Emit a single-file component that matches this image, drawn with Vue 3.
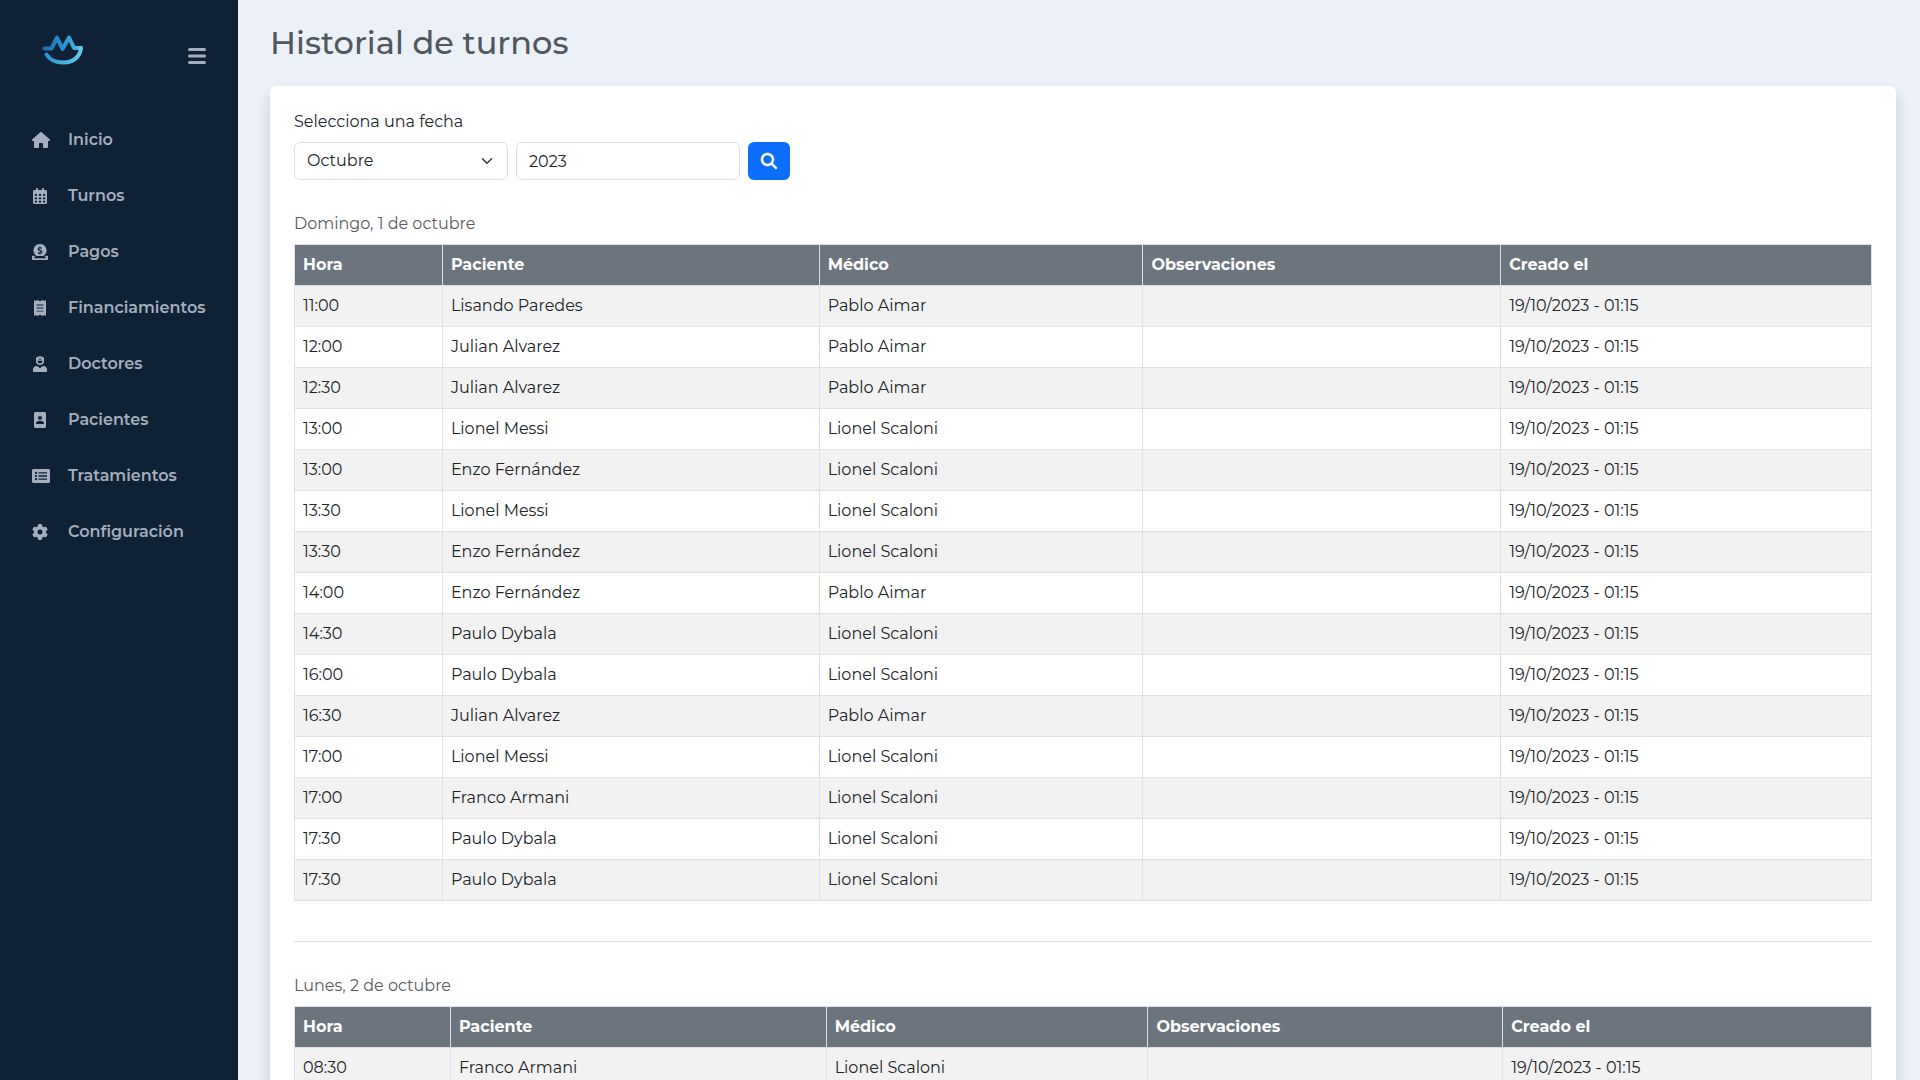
<script setup>
import { ref } from 'vue'

const menu = [
  { label: 'Inicio', w: 576, d: 'M575.8 255.5c0 18-15 32.1-32 32.1h-32l.7 160.2c0 2.7-.2 5.4-.5 8.1V472c0 22.1-17.9 40-40 40H456c-1.1 0-2.2 0-3.3-.1c-1.4 .1-2.8 .1-4.2 .1H416 392c-22.1 0-40-17.9-40-40V448 384c0-17.7-14.3-32-32-32H256c-17.7 0-32 14.3-32 32v64 24c0 22.1-17.9 40-40 40H160 128.1c-1.5 0-3-.1-4.5-.2c-1.2 .1-2.4 .2-3.6 .2H104c-22.1 0-40-17.9-40-40V360c0-.9 0-1.9 .1-2.8V287.6H32c-18 0-32-14-32-32.1c0-9 3-17 10-24L266.4 8c7-7 15-8 22-8s15 2 21 7L564.8 231.5c8 7 12 15 11 24z' },
  { label: 'Turnos', w: 448, d: 'M128 0c17.700 0 32 14.300 32 32v32h128V32c0-17.700 14.300-32 32-32s32 14.300 32 32v32h48c26.500 0 48 21.500 48 48v352c0 26.500-21.500 48-48 48H48c-26.500 0-48-21.500-48-48V112c0-26.500 21.500-48 48-48h48V32c0-17.700 14.300-32 32-32zM56 192v56h72v-56H56zm128 0v56h80v-56h-80zm136 0v56h72v-56h-72zM56 300v56h72v-56H56zm128 0v56h80v-56h-80zm136 0v56h72v-56h-72zM56 408v52h72v-52H56zm128 0v52h80v-52h-80zm136 0v52h72v-52h-72z' },
  { label: 'Pagos', w: 512, d: 'M256 0a208 208 0 0 1 147 355l-38 29H147l-38-29A208 208 0 0 1 256 0zM235 82v24c-35 6-54 29-54 57 0 43 37 56 68 65 30 9 38 14 38 27 0 12-12 18-31 18-21 0-41-8-56-17l-17 36c15 10 33 17 52 20v26h38v-25c36-5 56-29 56-59 0-45-37-58-69-67-28-8-37-13-37-25 0-9 10-17 28-17 18 0 34 5 48 13l16-36c-13-7-28-12-42-15V82h-38zM32 376H80l36 40H84c-11 0-20 8-20 18s9 18 20 18H428c11 0 20-8 20-18s-9-18-20-18H396l36-40H480c18 0 32 14 32 32v72c0 18-14 32-32 32H32c-18 0-32-14-32-32V408c0-18 14-32 32-32z' },
  { label: 'Financiamientos', w: 384, d: 'M0 0l54 32L108 0l56 32h56L276 0l54 32L384 0v512l-54-32-54 32-56-32h-56l-56 32-54-32L0 512V0zm80 144v28h224v-28H80zm0 98v28h224v-28H80zm0 98v28h224v-28H80z' },
  { label: 'Doctores', w: 448, d: 'M96 128V70c0-13 8-25 21-30l84-31c15-6 31-6 46 0l84 31c13 5 21 17 21 30v58v32a128 128 0 0 1-256 0zm48 20v12a80 80 0 0 0 160 0v-12zm32-56v20h96v-20l-48-20zM112 320c20 0 34 6 50 15l62 65 62-65c16-9 30-15 50-15 62 0 112 50 112 112v48c0 18-14 32-32 32H32c-18 0-32-14-32-32v-48c0-62 50-112 112-112z' },
  { label: 'Pacientes', w: 384, d: 'M48 0h288c26 0 48 22 48 48v416c0 26-22 48-48 48H48c-26 0-48-22-48-48V48C0 22 22 0 48 0zm144 128a64 64 0 1 0 0 128 64 64 0 0 0 0-128zM144 288c-44 0-80 36-80 80v16h256v-16c0-44-36-80-80-80h-96z' },
  { label: 'Tratamientos', w: 576, d: 'M48 32h480c27 0 48 21 48 48v352c0 27-21 48-48 48H48c-27 0-48-21-48-48V80c0-27 21-48 48-48zm80 88a36 36 0 1 0 0 72 36 36 0 0 0 0-72zm80 14v42h272v-42H208zm-80 86a36 36 0 1 0 0 72 36 36 0 0 0 0-72zm80 14v42h272v-42H208zm-80 86a36 36 0 1 0 0 72 36 36 0 0 0 0-72zm80 14v42h272v-42H208z' },
  { label: 'Configuración', w: 512, d: 'M495.9 166.600c3.200 8.700 .5 18.400-6.400 24.600l-43.300 39.400c1.100 8.300 1.700 16.800 1.700 25.400s-.6 17.100-1.700 25.400l43.300 39.400c6.900 6.200 9.600 15.900 6.400 24.600c-4.400 11.900-9.700 23.300-15.800 34.300l-4.700 8.100c-6.600 11-14 21.400-22.100 31.200c-5.900 7.200-15.700 9.600-24.500 6.800l-55.700-17.700c-13.400 10.300-28.200 18.900-44 25.400l-12.500 57.100c-2 9.100-9 16.300-18.200 17.800c-13.800 2.300-28 3.500-42.500 3.500s-28.700-1.200-42.500-3.500c-9.200-1.500-16.200-8.700-18.200-17.800l-12.500-57.100c-15.800-6.500-30.600-15.100-44-25.400L83.100 425.900c-8.800 2.800-18.600 .3-24.500-6.800c-8.100-9.800-15.500-20.200-22.100-31.200l-4.700-8.100c-6.100-11-11.400-22.400-15.800-34.300c-3.200-8.700-.5-18.400 6.400-24.600l43.300-39.400C64.600 273.100 64 264.600 64 256s.6-17.100 1.700-25.400L22.400 191.200c-6.900-6.200-9.600-15.900-6.400-24.600c4.400-11.900 9.700-23.300 15.800-34.300l4.700-8.100c6.600-11 14-21.400 22.100-31.200c5.900-7.200 15.700-9.600 24.500-6.800l55.700 17.700c13.400-10.300 28.200-18.900 44-25.400l12.500-57.100c2-9.100 9-16.300 18.200-17.800C227.300 1.200 241.500 0 256 0s28.700 1.200 42.500 3.500c9.200 1.500 16.200 8.700 18.200 17.800l12.500 57.100c15.800 6.500 30.600 15.100 44 25.400l55.700-17.700c8.800-2.800 18.600-.3 24.500 6.800c8.100 9.800 15.500 20.200 22.100 31.200l4.700 8.100c6.100 11 11.400 22.400 15.800 34.300zM256 336a80 80 0 1 0 0-160 80 80 0 1 0 0 160z' },
]

const months = ['Enero', 'Febrero', 'Marzo', 'Abril', 'Mayo', 'Junio', 'Julio', 'Agosto', 'Septiembre', 'Octubre', 'Noviembre', 'Diciembre']
const month = ref('Octubre')
const year = ref('2023')

const columns = ['Hora', 'Paciente', 'Médico', 'Observaciones', 'Creado el']
const created = '19/10/2023 - 01:15'
const days = [
  {
    title: 'Domingo, 1 de octubre',
    weights: [148, 377, 324, 358, 371],
    rows: [
      ['11:00', 'Lisando Paredes', 'Pablo Aimar'],
      ['12:00', 'Julian Alvarez', 'Pablo Aimar'],
      ['12:30', 'Julian Alvarez', 'Pablo Aimar'],
      ['13:00', 'Lionel Messi', 'Lionel Scaloni'],
      ['13:00', 'Enzo Fernández', 'Lionel Scaloni'],
      ['13:30', 'Lionel Messi', 'Lionel Scaloni'],
      ['13:30', 'Enzo Fernández', 'Lionel Scaloni'],
      ['14:00', 'Enzo Fernández', 'Pablo Aimar'],
      ['14:30', 'Paulo Dybala', 'Lionel Scaloni'],
      ['16:00', 'Paulo Dybala', 'Lionel Scaloni'],
      ['16:30', 'Julian Alvarez', 'Pablo Aimar'],
      ['17:00', 'Lionel Messi', 'Lionel Scaloni'],
      ['17:00', 'Franco Armani', 'Lionel Scaloni'],
      ['17:30', 'Paulo Dybala', 'Lionel Scaloni'],
      ['17:30', 'Paulo Dybala', 'Lionel Scaloni'],
    ],
  },
  {
    title: 'Lunes, 2 de octubre',
    weights: [156, 376, 322, 355, 369],
    rows: [['08:30', 'Franco Armani', 'Lionel Scaloni']],
  },
]
const share = (day, i) => `${(day.weights[i] / day.weights.reduce((a, b) => a + b)) * 100}%`
</script>

<template>
  <div class="layout">
    <aside class="sidebar">
      <header class="brand">
        <a href="#" class="logo" aria-label="Inicio">
          <svg width="42" height="32" viewBox="0 0 42 32" fill="none">
            <defs>
              <linearGradient id="smile" x1="0" y1="0" x2="1" y2="0">
                <stop offset="0" stop-color="#1d6fae" />
                <stop offset="0.5" stop-color="#2494d0" />
                <stop offset="1" stop-color="#4fc0e4" />
              </linearGradient>
              <linearGradient id="mouth" x1="0" y1="0" x2="1" y2="0">
                <stop offset="0" stop-color="#2a93cf" />
                <stop offset="1" stop-color="#62cdea" />
              </linearGradient>
            </defs>
            <path
              d="M2.500 14.500H9.500L15 3.500L20.500 15L27 3.500L32 14H39"
              stroke="url(#smile)" stroke-width="4" stroke-linecap="round" stroke-linejoin="round"
            />
            <path
              d="M39 14C38 23 31 28.500 21.500 28.500C14 28.500 7.500 25.500 4.500 20.500"
              stroke="url(#mouth)" stroke-width="4" stroke-linecap="round"
            />
          </svg>
        </a>
        <button type="button" class="toggle" aria-label="Menú">
          <svg width="18" height="16" viewBox="0 0 18 16" stroke="currentColor" stroke-width="3" stroke-linecap="round">
            <path d="M1.500 1.500H16.500M1.500 8H16.500M1.500 14.500H16.500" />
          </svg>
        </button>
      </header>
      <nav class="menu">
        <a v-for="item in menu" :key="item.label" href="#" class="link">
          <span class="icon">
            <svg :width="item.w / 32" height="16" :viewBox="`0 0 ${item.w} 512`" fill="currentColor" fill-rule="evenodd">
              <path :d="item.d" />
            </svg>
          </span>
          {{ item.label }}
        </a>
      </nav>
    </aside>

    <main class="content">
      <h1 class="title">Historial de turnos</h1>
      <div class="card">
        <label class="label" for="month">Selecciona una fecha</label>
        <form class="filters" @submit.prevent>
          <select id="month" v-model="month" class="control month">
            <option v-for="m in months" :key="m">{{ m }}</option>
          </select>
          <input v-model="year" class="control year" type="text" aria-label="Año" />
          <button type="submit" class="search" aria-label="Buscar">
            <svg width="16" height="16" viewBox="0 0 512 512" fill="currentColor" stroke="currentColor" stroke-width="16">
              <path d="M416 208c0 45.900-14.900 88.300-40 122.700L502.600 457.400c12.500 12.500 12.500 32.800 0 45.300s-32.800 12.500-45.300 0L330.700 376c-34.400 25.200-76.800 40-122.700 40C93.100 416 0 322.900 0 208S93.100 0 208 0S416 93.100 416 208zM208 352a144 144 0 1 0 0-288 144 144 0 1 0 0 288z" />
            </svg>
          </button>
        </form>

        <section v-for="day in days" :key="day.title" class="day">
          <h2 class="date">{{ day.title }}</h2>
          <table class="table">
            <colgroup>
              <col v-for="(c, i) in columns" :key="c" :style="{ width: share(day, i) }" />
            </colgroup>
            <thead>
              <tr>
                <th v-for="c in columns" :key="c" scope="col">{{ c }}</th>
              </tr>
            </thead>
            <tbody>
              <tr v-for="(row, r) in day.rows" :key="r">
                <td v-for="cell in row" :key="cell">{{ cell }}</td>
                <td></td>
                <td>{{ created }}</td>
              </tr>
            </tbody>
          </table>
        </section>
      </div>
    </main>
  </div>
</template>

<style>
body {
  background: #ecf1f8;
}
</style>

<style scoped>
* {
  box-sizing: border-box;
}
.layout {
  display: flex;
  height: 100vh;
  font-family: Montserrat, Inter, "Noto Sans", sans-serif;
  font-size: 16px;
  line-height: 24px;
  color: #212529;
}
.sidebar {
  flex: 0 0 238px;
  background: #0e2135;
  color: #a3afbd;
}
.brand {
  display: flex;
  justify-content: space-between;
  height: 112px;
  padding: 34px 32px 0 42px;
}
.logo {
  height: 32px;
}
.toggle {
  display: flex;
  margin-top: 14px;
  padding: 0;
  height: 16px;
  border: 0;
  background: none;
  color: inherit;
}
.menu {
  display: flex;
  flex-direction: column;
}
.link {
  display: flex;
  align-items: center;
  gap: 20px;
  height: 56px;
  padding-left: 32px;
  font-weight: 600;
  color: inherit;
  text-decoration: none;
}
.icon {
  display: flex;
  flex: none;
  width: 16px;
  justify-content: safe center;
}
.icon svg {
  flex: none;
}
.content {
  flex: 1;
  min-width: 0;
  padding: 24px 24px 24px 32px;
  overflow-y: auto;
  scrollbar-width: none;
}
.title {
  margin: 0 0 24px;
  font-size: 32px;
  line-height: 38px;
  font-weight: 500;
  color: #50575e;
}
.card {
  padding: 24px;
  border-radius: 6px;
  background: #fff;
  box-shadow: 0 8px 16px rgba(0, 0, 0, 0.15);
}
.label {
  display: block;
  margin-bottom: 8px;
}
.filters {
  display: flex;
  gap: 8px;
}
.control {
  height: 38px;
  padding: 6px 12px;
  border: 1px solid #dee2e6;
  border-radius: 6px;
  background: #fff;
  font: inherit;
  color: inherit;
}
.month {
  width: 214px;
  appearance: none;
  background: #fff url("data:image/svg+xml,%3Csvg xmlns='http://www.w3.org/2000/svg' viewBox='0 0 16 16'%3E%3Cpath fill='none' stroke='%23343a40' stroke-linecap='round' stroke-linejoin='round' stroke-width='2' d='m2 5 6 6 6-6'/%3E%3C/svg%3E") no-repeat right 12px center / 16px 12px;
}
.year {
  width: 224px;
}
.search {
  display: flex;
  align-items: center;
  justify-content: center;
  width: 42px;
  height: 38px;
  padding: 0;
  border: 0;
  border-radius: 6px;
  background: #0d6efd;
  color: #fff;
}
.search svg {
  overflow: visible;
}
.day {
  margin-top: 32px;
}
.day + .day {
  margin-top: 40px;
  padding-top: 32px;
  border-top: 1px solid #dee2e6;
}
.date {
  margin: 0 0 8px;
  font-size: 16px;
  line-height: 24px;
  font-weight: 400;
  color: #595c5f;
}
.table {
  width: 100%;
  table-layout: fixed;
  border-collapse: collapse;
}
.table th,
.table td {
  height: 41px;
  padding: 8px;
  border: 1px solid #dee2e6;
  text-align: left;
}
.table th {
  background: #6c757d;
  color: #fff;
  font-weight: 700;
}
.table tbody tr:nth-child(odd) {
  background: #f2f2f2;
}
</style>
